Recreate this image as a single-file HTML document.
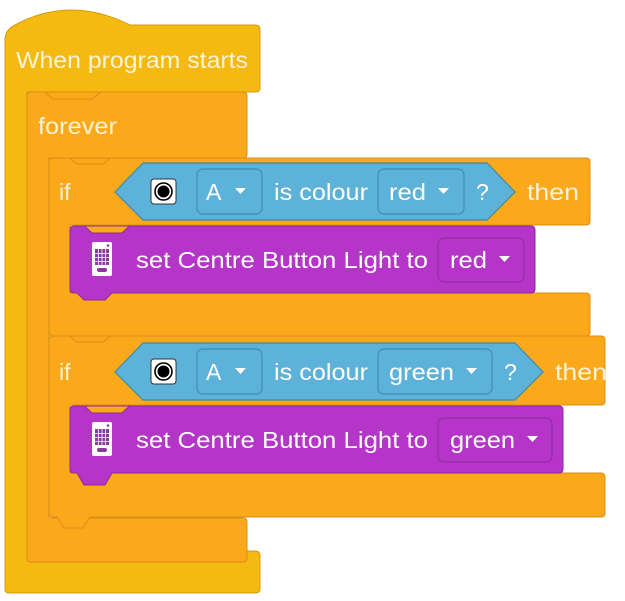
<!DOCTYPE html>
<html><head><meta charset="utf-8"><style>
html,body{margin:0;padding:0;background:#fff;width:625px;height:601px;overflow:hidden}
svg{display:block}
text{font-family:"Liberation Sans",sans-serif;font-size:23px}
.o{fill:#FFF3D6}.w{fill:#fff}
</style></head><body>
<svg width="625" height="601" viewBox="0 0 625 601">
<path d="M9,593 Q5,593 5,589 L5,40 Q5,30 15,25 Q70,-5 130,25 L255,25 Q260,25 260,30 L260,88 Q260,92 255,92 L27,92 L27,551 L255,551 Q260,551 260,556 L260,589 Q260,593 255,593 Z" fill="#F4BA12" stroke="#D49A10" stroke-width="1"/>
<path d="M31,562 Q27,562 27,558 L27,96 Q27,92 31,92 L243,92 Q247,92 247,96 L247,154 Q247,158 243,158 L49,158 L49,518 L243,518 Q247,518 247,522 L247,558 Q247,562 243,562 Z" fill="#FBA91B" stroke="#D98E14" stroke-width="1"/>
<path d="M45,92.5 L53,99 L92,99 L100,92.5" fill="none" stroke="#D98E14"/>
<path d="M53,336 Q49,336 49,332 L49,162 Q49,158 53,158 L586,158 Q590,158 590,162 L590,221 Q590,225 586,225 L70,225 L70,293 L586,293 Q590,293 590,297 L590,332 Q590,336 586,336 Z" fill="#FBA91B" stroke="#D98E14" stroke-width="1"/>
<path d="M70,158.5 L77,164 L103,164 L110,158.5" fill="none" stroke="#D98E14"/>
<path d="M53,517 Q49,517 49,513 L49,340 Q49,336 53,336 L601,336 Q605,336 605,340 L605,401 Q605,405 601,405 L70,405 L70,473 L601,473 Q605,473 605,477 L605,513 Q605,517 601,517 L90,517 L83,528 L64,528 L57,517 Z" fill="#FBA91B" stroke="#D98E14" stroke-width="1"/>
<path d="M70,336.5 L77,342 L103,342 L110,336.5" fill="none" stroke="#D98E14"/>
<path d="M143,163 L487,163 L515,192 L487,220 L143,220 L115,192 Z" fill="#5DB2D9" stroke="#3C89AE" stroke-width="1.2"/>
<path d="M143,343 L515,343 L543,372 L515,400 L143,400 L115,372 Z" fill="#5DB2D9" stroke="#3C89AE" stroke-width="1.2"/>
<path d="M74,293 Q70,293 70,289 L70,230 Q70,226 74,226 L531,226 Q535,226 535,230 L535,289 Q535,293 531,293 L112,293 L105,300 L84,300 L77,293 Z" fill="#B535C8" stroke="#8C2A9E" stroke-width="1"/>
<path d="M85,226.5 L92,233 L122,233 L129,226.5" fill="#FBA91B" stroke="#8C2A9E"/>
<path d="M74,473 Q70,473 70,469 L70,410 Q70,406 74,406 L559,406 Q563,406 563,410 L563,469 Q563,473 559,473 L112,473 L105,485 L84,485 L77,473 Z" fill="#B535C8" stroke="#8C2A9E" stroke-width="1"/>
<path d="M85,406.5 L92,413 L122,413 L129,406.5" fill="#FBA91B" stroke="#8C2A9E"/>
<rect x="197" y="169" width="65" height="45" rx="6" fill="#5DB2D9" stroke="#3C8DB3" stroke-width="1.2"/>
<rect x="378" y="169" width="86" height="45" rx="6" fill="#5DB2D9" stroke="#3C8DB3" stroke-width="1.2"/>
<rect x="197" y="349" width="65" height="45" rx="6" fill="#5DB2D9" stroke="#3C8DB3" stroke-width="1.2"/>
<rect x="378" y="349" width="114" height="45" rx="6" fill="#5DB2D9" stroke="#3C8DB3" stroke-width="1.2"/>
<rect x="438" y="238" width="86" height="44" rx="6" fill="#B535C8" stroke="#8C2A9E" stroke-width="1"/>
<rect x="438" y="418" width="114" height="44" rx="6" fill="#B535C8" stroke="#8C2A9E" stroke-width="1"/>
<g id="s"><rect x="151" y="179" width="25" height="25" rx="3" fill="#fff" stroke="#333" stroke-width="1"/><circle cx="163.5" cy="191.5" r="8.5" fill="none" stroke="#000" stroke-width="1.6"/><circle cx="163.5" cy="191.5" r="6" fill="#000"/></g>
<use href="#s" y="180"/>
<g id="h"><rect x="92" y="242" width="20" height="34" rx="2" fill="#fff"/><rect x="95" y="249" width="14" height="16" fill="#8A3A9E"/><path d="M95,253.5H109M95,257.5H109M95,261.5H109M98.5,249V265M102,249V265M105.5,249V265" stroke="#fff" stroke-width="0.8"/><rect x="97" y="268" width="10" height="4" rx="2" fill="#8A3A9E"/><circle cx="108" cy="245.5" r="1.3" fill="#8A3A9E"/></g>
<use href="#h" y="180"/>
<text x="16" y="68" class="o" textLength="232" lengthAdjust="spacingAndGlyphs">When program starts</text>
<text x="38" y="134" class="o" textLength="79" lengthAdjust="spacingAndGlyphs">forever</text>
<text x="59" y="200" class="o">if</text>
<text x="59" y="380" class="o">if</text>
<g class="w">
<text x="206" y="200">A</text><path d="M235,188h11l-5.5,6z"/>
<text x="274" y="200" textLength="94" lengthAdjust="spacingAndGlyphs">is colour</text>
<text x="389" y="200" textLength="37" lengthAdjust="spacingAndGlyphs">red</text><path d="M438,188h11l-5.5,6z"/>
<text x="476" y="200">?</text>
<text x="206" y="380">A</text><path d="M235,368h11l-5.5,6z"/>
<text x="274" y="380" textLength="94" lengthAdjust="spacingAndGlyphs">is colour</text>
<text x="389" y="380" textLength="65" lengthAdjust="spacingAndGlyphs">green</text><path d="M466,368h11l-5.5,6z"/>
<text x="504" y="380">?</text>
<text x="136" y="268" textLength="292" lengthAdjust="spacingAndGlyphs">set Centre Button Light to</text>
<text x="450" y="268" textLength="37" lengthAdjust="spacingAndGlyphs">red</text><path d="M499,256h11l-5.5,6z"/>
<text x="136" y="448" textLength="292" lengthAdjust="spacingAndGlyphs">set Centre Button Light to</text>
<text x="450" y="448" textLength="65" lengthAdjust="spacingAndGlyphs">green</text><path d="M527,436h11l-5.5,6z"/>
</g>
<text x="527" y="200" class="o" textLength="52" lengthAdjust="spacingAndGlyphs">then</text>
<text x="555" y="380" class="o" textLength="52" lengthAdjust="spacingAndGlyphs">then</text>
</svg>
</body></html>
